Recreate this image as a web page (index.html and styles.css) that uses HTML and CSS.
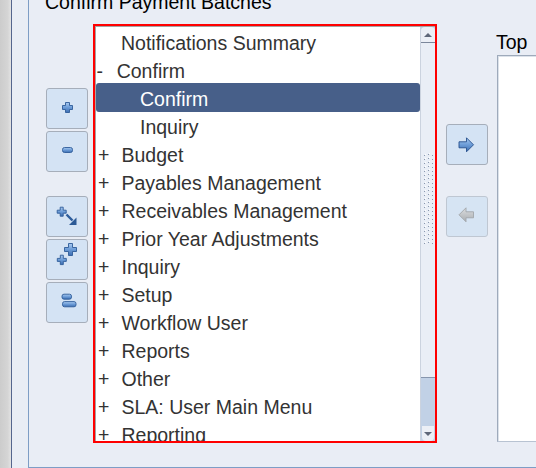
FILE: index.html
```html
<!DOCTYPE html>
<html>
<head>
<meta charset="utf-8">
<link rel="stylesheet" href="styles.css">
</head>
<body>
<svg class="defs" width="0" height="0" aria-hidden="true">
  <defs>
    <linearGradient id="gb" x1="0" y1="0" x2="0" y2="1">
      <stop offset="0" stop-color="#a9caf0"/>
      <stop offset="0.5" stop-color="#6c9cd7"/>
      <stop offset="1" stop-color="#3b6db1"/>
    </linearGradient>
    <linearGradient id="gg" x1="0" y1="0" x2="0" y2="1">
      <stop offset="0" stop-color="#dcdee0"/>
      <stop offset="1" stop-color="#a9adb1"/>
    </linearGradient>
    <pattern id="grip" width="8" height="4" patternUnits="userSpaceOnUse">
      <rect x="0" y="2" width="1" height="1" fill="#8a98ae"/>
      <rect x="1" y="1" width="1" height="1" fill="#ffffff"/>
      <rect x="4" y="1" width="1" height="1" fill="#8a98ae"/>
      <rect x="5" y="0" width="1" height="1" fill="#ffffff"/>
    </pattern>
  </defs>
</svg>
<div class="app">
  <div class="side"></div>
  <div class="main">
    <div class="group">
      <div class="title">Confirm Payment Batches</div>
      <div class="row">
        <div class="tools">
          <button class="btn" type="button" title="Expand">
            <svg width="40" height="39" viewBox="0 0 40 39"><path d="M18.5 13.5h4v3h3v4h-3v3h-4v-3h-3v-4h3z" fill="url(#gb)" stroke="#2e5b98" stroke-width="0.9"/></svg>
          </button>
          <button class="btn" type="button" title="Collapse">
            <svg width="40" height="39" viewBox="0 0 40 39"><rect x="15.5" y="15.5" width="10" height="5" rx="2" fill="url(#gb)" stroke="#2e5b98" stroke-width="0.9"/></svg>
          </button>
          <button class="btn btn-sep" type="button" title="Expand Branch">
            <svg width="40" height="39" viewBox="0 0 40 39"><path d="M13.2 10.2h3v3h3v3h-3v3h-3v-3h-3v-3h3z" fill="url(#gb)" stroke="#2e5b98" stroke-width="0.9"/><path d="M19.5 17.5l6 6" stroke="#2f5e9c" stroke-width="2.4"/><path d="M29.5 20.5v7.5h-7.5z" fill="#2c5a96"/></svg>
          </button>
          <button class="btn" type="button" title="Expand All">
            <svg width="40" height="39" viewBox="0 0 40 39"><path d="M21.5 3.5h4v4h4v4h-4v4h-4v-4h-4v-4h4z" fill="url(#gb)" stroke="#2e5b98" stroke-width="0.9"/><path d="M13.3 15.2h3v3.2h3v3h-3v3.2h-3v-3.2h-3v-3h3z" fill="url(#gb)" stroke="#2e5b98" stroke-width="0.9"/></svg>
          </button>
          <button class="btn" type="button" title="Collapse All">
            <svg width="40" height="39" viewBox="0 0 40 39"><rect x="15" y="11.2" width="9.5" height="5" rx="2" fill="url(#gb)" stroke="#2e5b98" stroke-width="0.9"/><rect x="15.5" y="18.6" width="13.5" height="5.2" rx="2" fill="url(#gb)" stroke="#2e5b98" stroke-width="0.9"/></svg>
          </button>
        </div>
        <div class="focus">
          <div class="list">
            <div class="items">
              <div class="item leaf">Notifications Summary</div>
              <div class="item"><span class="tg tg-m">-</span>Confirm</div>
              <div class="item child sel">Confirm</div>
              <div class="item child">Inquiry</div>
              <div class="item"><span class="tg tg-p">+</span>Budget</div>
              <div class="item"><span class="tg tg-p">+</span>Payables Management</div>
              <div class="item"><span class="tg tg-p">+</span>Receivables Management</div>
              <div class="item"><span class="tg tg-p">+</span>Prior Year Adjustments</div>
              <div class="item"><span class="tg tg-p">+</span>Inquiry</div>
              <div class="item"><span class="tg tg-p">+</span>Setup</div>
              <div class="item"><span class="tg tg-p">+</span>Workflow User</div>
              <div class="item"><span class="tg tg-p">+</span>Reports</div>
              <div class="item"><span class="tg tg-p">+</span>Other</div>
              <div class="item"><span class="tg tg-p">+</span>SLA: User Main Menu</div>
              <div class="item"><span class="tg tg-p">+</span>Reporting</div>
            </div>
            <div class="sbar">
              <div class="sb-up"><span class="tri-up"></span></div>
              <div class="sb-thumb">
                <svg class="grip" width="9" height="92" viewBox="0 0 9 92"><rect width="9" height="92" fill="url(#grip)"/></svg>
              </div>
              <div class="sb-track"></div>
              <div class="sb-down"><span class="tri-down"></span></div>
            </div>
          </div>
        </div>
        <div class="moves">
          <button class="btn" type="button" title="Add">
            <svg width="40" height="39" viewBox="0 0 40 39"><path d="M12 16.8h7.5v-4l7 7-7 7v-4H12z" fill="url(#gb)" stroke="#254f8c" stroke-width="0.9"/></svg>
          </button>
          <button class="btn btn-off btn-sep2" type="button" title="Remove">
            <svg width="40" height="39" viewBox="0 0 40 39"><path d="M26.5 14.8H19v-4l-7 7 7 7v-4h7.5z" fill="url(#gg)" stroke="#a2a6aa" stroke-width="0.9"/></svg>
          </button>
        </div>
        <div class="target">
          <div class="tlabel">Top</div>
          <div class="tbox"></div>
        </div>
      </div>
    </div>
  </div>
</div>
</body>
</html>
```
FILE: styles.css
```css
html, body {
  margin: 0;
  padding: 0;
}
body {
  width: 536px;
  height: 468px;
  overflow: hidden;
  background: #e9edf5;
  font-family: "Liberation Sans", Arial, sans-serif;
}
.defs {
  display: block;
  width: 0;
  height: 0;
  overflow: hidden;
}
.app {
  display: flex;
  height: 468px;
}
.side {
  width: 11px;
  flex: none;
  background: linear-gradient(90deg, #cccccc 0, #d5d5d5 70%, #e3e3e3 100%);
  border-right: 1px solid #55668e;
}
.main {
  flex: 1;
  padding-left: 16px;
  min-width: 0;
}
.group {
  box-sizing: border-box;
  display: flex;
  flex-direction: column;
  height: 468px;
  border-left: 1px solid #7e9dc5;
  border-bottom: 1px solid #7e9dc5;
  width: 600px;
}
.title {
  font-size: 19.5px;
  line-height: 22px;
  height: 22px;
  margin-top: -9px;
  padding-left: 16px;
  color: #000;
  white-space: nowrap;
  flex: none;
}
.row {
  display: flex;
  align-items: flex-start;
  margin-top: 11px;
  padding-left: 17px;
  flex: none;
}
.tools {
  display: flex;
  flex-direction: column;
  gap: 2px;
  margin-top: 64px;
  width: 42px;
  flex: none;
}
.btn {
  box-sizing: border-box;
  width: 42px;
  height: 41px;
  padding: 0;
  margin: 0;
  border: 1px solid #a6aeba;
  border-radius: 3px;
  background: #d4e3f4;
  display: block;
}
.btn svg {
  display: block;
}
.btn-sep {
  margin-top: 22px;
}
.btn-off {
  border-color: #bfc7d2;
  background: #d6e4f3;
}
.focus {
  box-sizing: border-box;
  width: 344px;
  height: 419px;
  margin-left: 5px;
  border: 2px solid #ff0000;
  flex: none;
}
.list {
  box-sizing: border-box;
  display: flex;
  height: 415px;
  border-top: 1px solid #a4a4a4;
  border-left: 1px solid #a4a4a4;
  background: #ffffff;
}
.items {
  box-sizing: border-box;
  width: 324px;
  height: 414px;
  padding-top: 2px;
  overflow: hidden;
  flex: none;
}
.item {
  box-sizing: border-box;
  height: 28px;
  line-height: 28px;
  font-size: 19.5px;
  color: #333333;
  white-space: pre;
  padding-left: 2px;
}
.item.leaf {
  padding-left: 25px;
}
.item.child {
  padding-left: 44px;
}
.item.sel {
  height: 29px;
  margin-top: -2px;
  margin-bottom: 1px;
  padding-top: 2px;
  line-height: 28px;
  background: #475f89;
  color: #ffffff;
  border-radius: 3px;
}
.tg {
  display: inline-block;
}
.tg-p {
  width: 23.5px;
}
.tg-m {
  width: 20.2px;
  margin-left: -1.5px;
}
.sbar {
  width: 15px;
  height: 414px;
  flex: none;
  display: flex;
  flex-direction: column;
  box-sizing: border-box;
  border-left: 1px solid #cbd3df;
  background: #c1d1e6;
}
.sb-up {
  box-sizing: border-box;
  height: 16px;
  background: #ebeff6;
  border-bottom: 1px solid #7b879b;
  border-radius: 4px 4px 0 0;
  display: flex;
  align-items: center;
  justify-content: center;
}
.tri-up {
  width: 0;
  height: 0;
  border-left: 4px solid transparent;
  border-right: 4px solid transparent;
  border-bottom: 4px solid #5e6779;
}
.sb-thumb {
  box-sizing: border-box;
  height: 335px;
  background: #e9eef6;
  border-bottom: 1px solid #8695ad;
  padding-top: 110px;
}
.grip {
  display: block;
  margin-left: 3px;
}
.sb-track {
  flex: 1;
}
.sb-down {
  box-sizing: border-box;
  height: 15px;
  margin: 0 1px;
  background: #ebeff6;
  border-radius: 0 0 4px 4px;
  display: flex;
  align-items: center;
  justify-content: center;
}
.tri-down {
  width: 0;
  height: 0;
  border-left: 4px solid transparent;
  border-right: 4px solid transparent;
  border-top: 4px solid #5e6779;
}
.moves {
  display: flex;
  flex-direction: column;
  margin-top: 100px;
  margin-left: 9px;
  width: 42px;
  flex: none;
}
.btn-sep2 {
  margin-top: 31px;
}
.target {
  margin-left: 8px;
  margin-top: 7px;
  flex: none;
  width: 80px;
}
.tlabel {
  font-size: 19.5px;
  line-height: 22px;
  height: 22px;
  color: #000;
}
.tbox {
  box-sizing: border-box;
  margin-top: 2px;
  margin-left: 1px;
  height: 387px;
  background: #ffffff;
  border-left: 1px solid #9eaabb;
  border-top: 1px solid #9eaabb;
  border-bottom: 1px solid #b8c3d2;
  box-shadow: inset 1px 1px 0 #dce2ea;
}
```
